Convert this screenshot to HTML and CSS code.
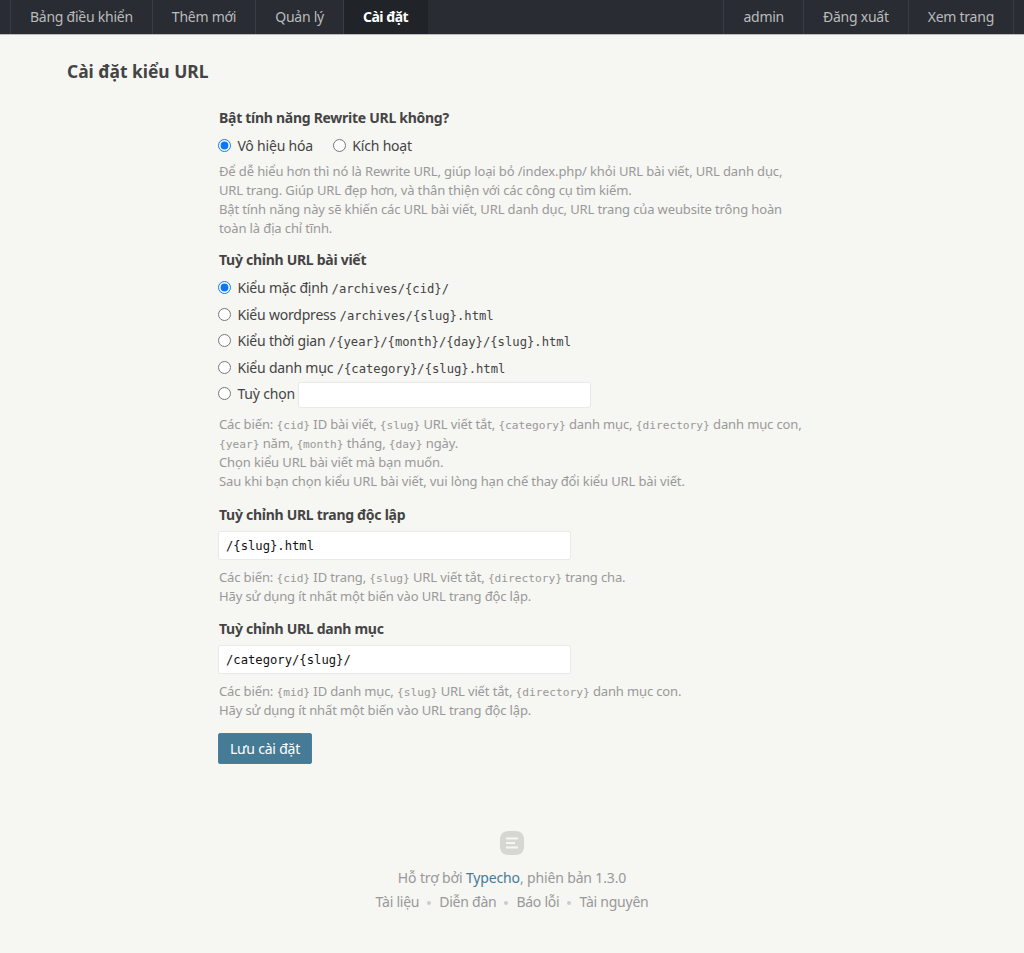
FILE: index.html
```html
<!DOCTYPE html>
<html lang="vi">

<head>
    <meta charset="UTF-8">
    <meta name="viewport" content="width=device-width, initial-scale=1.0">
    <title>Cài đặt kiểu URL</title>
    <link rel="stylesheet" href="styles.css">
</head>

<body>

    <nav class="topbar">
        <div class="menu">
            <a href="#">Bảng điều khiển</a>
            <a href="#">Thêm mới</a>
            <a href="#">Quản lý</a>
            <a href="#" class="active">Cài đặt</a>
        </div>
        <div class="menu">
            <a href="#">admin</a>
            <a href="#">Đăng xuất</a>
            <a href="#">Xem trang</a>
        </div>
    </nav>

    <main class="main">
        <h2 class="page-title">Cài đặt kiểu URL</h2>

        <form class="options" action="#" method="post">
            <section class="option option-first">
                <div class="option-label">Bật tính năng Rewrite URL không?</div>
                <div class="radio-inline">
                    <label><input type="radio" name="rewrite" checked> Vô hiệu hóa</label>
                    <label><input type="radio" name="rewrite"> Kích hoạt</label>
                </div>
                <p class="hint hint-wide">Để dễ hiểu hơn thì nó là Rewrite URL, giúp loại bỏ /index.php/ khỏi URL bài viết, URL danh dục, URL trang. Giúp URL đẹp hơn, và thân thiện với các công cụ tìm kiếm.<br>Bật tính năng này sẽ khiến các URL bài viết, URL danh dục, URL trang của weubsite trông hoàn toàn là địa chỉ tĩnh.</p>
            </section>

            <section class="option">
                <div class="option-label">Tuỳ chỉnh URL bài viết</div>
                <ul class="radio-list">
                    <li><label><input type="radio" name="post" checked> Kiểu mặc định <code>/archives/{cid}/</code></label></li>
                    <li><label><input type="radio" name="post"> Kiểu wordpress <code>/archives/{slug}.html</code></label></li>
                    <li><label><input type="radio" name="post"> Kiểu thời gian <code>/{year}/{month}/{day}/{slug}.html</code></label></li>
                    <li><label><input type="radio" name="post"> Kiểu danh mục <code>/{category}/{slug}.html</code></label></li>
                    <li class="custom"><label><input type="radio" name="post"> Tuỳ chọn</label> <input type="text" class="text-custom"></li>
                </ul>
                <p class="hint">Các biến: <code>{cid}</code> ID bài viết, <code>{slug}</code> URL viết tắt, <code>{category}</code> danh mục, <code>{directory}</code> danh mục con, <code>{year}</code> năm, <code>{month}</code> tháng, <code>{day}</code> ngày.<br>Chọn kiểu URL bài viết mà bạn muốn.<br>Sau khi bạn chọn kiểu URL bài viết, vui lòng hạn chế thay đổi kiểu URL bài viết.</p>
            </section>

            <section class="option option-tight">
                <label class="option-label" for="pagePattern">Tuỳ chỉnh URL trang độc lập</label>
                <input type="text" class="text-mono" id="pagePattern" value="/{slug}.html">
                <p class="hint">Các biến: <code>{cid}</code> ID trang, <code>{slug}</code> URL viết tắt, <code>{directory}</code> trang cha.<br>Hãy sử dụng ít nhất một biến vào URL trang độc lập.</p>
            </section>

            <section class="option option-tight">
                <label class="option-label" for="categoryPattern">Tuỳ chỉnh URL danh mục</label>
                <input type="text" class="text-mono" id="categoryPattern" value="/category/{slug}/">
                <p class="hint">Các biến: <code>{mid}</code> ID danh mục, <code>{slug}</code> URL viết tắt, <code>{directory}</code> danh mục con.<br>Hãy sử dụng ít nhất một biến vào URL trang độc lập.</p>
            </section>

            <button type="submit" class="btn-save">Lưu cài đặt</button>
        </form>
    </main>

    <footer class="footer">
        <svg class="footer-logo" width="24" height="24" viewBox="0 0 24 24" aria-hidden="true">
            <path d="M9 0h6c6 0 9 3 9 9v6c0 6-3 9-9 9H9c-6 0-9-3-9-9V9c0-6 3-9 9-9z" fill="#d6d6d3"/>
            <path d="M6 7.500h12M6 12h9M6 16.500h12" stroke="#f6f6f3" stroke-width="1.800" fill="none"/>
        </svg>
        <p>Hỗ trợ bởi <a href="#" class="brand">Typecho</a>, phiên bản 1.3.0</p>
        <ul class="footer-links">
            <li><a href="#">Tài liệu</a></li>
            <li><a href="#">Diễn đàn</a></li>
            <li><a href="#">Báo lỗi</a></li>
            <li><a href="#">Tài nguyên</a></li>
        </ul>
    </footer>

</body>

</html>
```

FILE: styles.css
```css
* {
    box-sizing: border-box;
    margin: 0;
}

body {
    min-height: 100vh;
    font-family: "Noto Sans", Arial, sans-serif;
    font-size: 14px;
    letter-spacing: -0.2px;
    color: #444;
    background-color: #f6f6f3;
}

a {
    text-decoration: none;
}

code {
    font-family: "DejaVu Sans Mono", monospace;
    font-size: 12.200px;
    line-height: 1;
    letter-spacing: 0;
}

/* barra superior */
.topbar {
    display: flex;
    justify-content: space-between;
    height: 35px;
    padding: 0 10px;
    background-color: #292d33;
    border-bottom: 1px solid #bbb;
}

.menu {
    display: flex;
    border-left: 1px solid #383d45;
}

.menu a {
    padding: 0 19px;
    line-height: 34px;
    letter-spacing: -0.250px;
    color: #bbb;
    border-right: 1px solid #383d45;
}

.menu a.active {
    color: #fff;
    font-weight: bold;
    letter-spacing: -0.500px;
    background-color: #202328;
    border-right-color: #202328;
}

.main {
    padding: 0 67px;
}

.page-title {
    padding-top: 24px;
    font-size: 17.400px;
    line-height: 25px;
    letter-spacing: 0;
}

.options {
    width: 590px;
    margin: 24px 0 0 151px;
}

.option {
    margin-bottom: 14px;
}

.option-first {
    margin-bottom: 12px;
}

.option-tight {
    margin-bottom: 13px;
}

.option-label {
    display: block;
    margin-bottom: 5px;
    padding-left: 1px;
    font-weight: bold;
    line-height: 20px;
    letter-spacing: -0.280px;
}

.radio-inline {
    display: flex;
    gap: 20px;
    line-height: 26px;
}

input[type="radio"] {
    width: 13px;
    height: 13px;
    margin: 0 3px 0 0;
    vertical-align: -1px;
    accent-color: #0a78f5;
}

.radio-list {
    padding: 0;
    list-style: none;
}

.radio-list li {
    height: 26.500px;
    line-height: 26.500px;
}

.radio-list .custom {
    display: flex;
    align-items: center;
    gap: 3px;
    height: 27px;
    margin-bottom: 5px;
}

input[type="text"] {
    border: 1px solid #e9e9e6;
    border-radius: 2px;
    background-color: #fff;
    outline: none;
}

.text-custom {
    width: 293px;
    height: 26px;
}

.text-mono {
    display: block;
    width: 353px;
    height: 29px;
    margin-top: 6px;
    padding: 0 7px;
    font-family: "DejaVu Sans Mono", monospace;
    font-size: 12.200px;
    color: #111;
}

.hint {
    margin-top: 3px;
    padding-left: 1px;
    font-size: 13px;
    line-height: 19px;
    letter-spacing: -0.130px;
    color: #999;
}

.radio-list + .hint {
    margin-top: 7px;
}

.text-mono + .hint {
    margin-top: 8px;
}

.hint-wide {
    width: 571px;
}

.hint code {
    font-size: 11.200px;
}

.btn-save {
    display: block;
    width: 94px;
    height: 31px;
    font-family: inherit;
    font-size: 14px;
    letter-spacing: -0.200px;
    color: #fff;
    background-color: #467b96;
    border: 1px solid #4a819c;
    border-radius: 2px;
}

.footer {
    margin-top: 67px;
    text-align: center;
    color: #999;
}

.footer-logo {
    display: block;
    margin: 0 auto 11px;
}

.footer p {
    line-height: 24px;
    letter-spacing: -0.150px;
}

.brand {
    color: #467b96;
}

.footer-links {
    display: flex;
    justify-content: center;
    gap: 20px;
    padding: 0;
    line-height: 24px;
    letter-spacing: -0.250px;
    list-style: none;
}

.footer-links a {
    color: #999;
}

.footer-links li + li {
    position: relative;
}

.footer-links li + li::before {
    content: "";
    position: absolute;
    left: -12px;
    top: 11px;
    width: 4px;
    height: 4px;
    border-radius: 50%;
    background-color: #ccc;
}
```
